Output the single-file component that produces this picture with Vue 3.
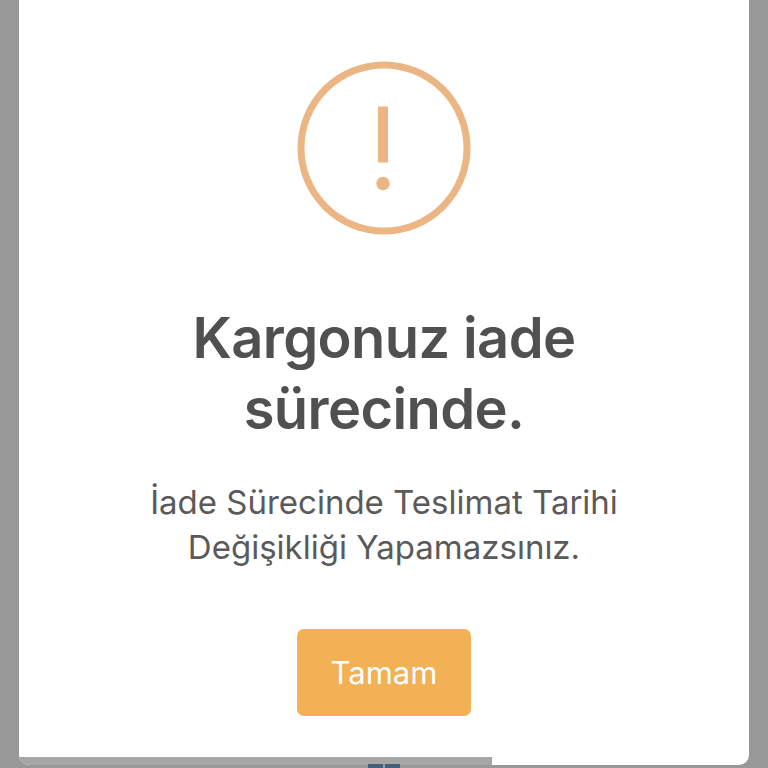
<script setup>
const title = ['Kargonuz iade', 'sürecinde.']
const body = ['İade Sürecinde Teslimat Tarihi', 'Değişikliği Yapamazsınız.']
</script>

<template>
  <main class="page">
    <section class="modal">
      <svg class="icon" width="174" height="174" viewBox="0 0 174 174" aria-hidden="true">
        <circle cx="87" cy="87" r="83" fill="none" stroke="#ebb684" stroke-width="7" />
        <rect x="81" y="45.500" width="10" height="56" fill="#ebb684" />
        <circle cx="86" cy="122.500" r="6.700" fill="#ebb684" />
      </svg>
      <h1 class="title"><span v-for="l in title" :key="l">{{ l }}</span></h1>
      <p class="text"><span v-for="l in body" :key="l">{{ l }}</span></p>
      <button class="ok" type="button">Tamam</button>
      <div class="strip"></div>
    </section>
    <div class="peek"></div>
  </main>
</template>

<style scoped>
.page {
  width: 768px;
  height: 768px;
  background: #999999;
  overflow: hidden;
  position: relative;
  font-family: Inter, "Liberation Sans", sans-serif;
}
.modal {
  position: relative;
  width: 730px;
  height: 765px;
  margin-left: 19px;
  background: #fff;
  border-radius: 0 0 10px 10px;
  overflow: hidden;
  display: flex;
  flex-direction: column;
  align-items: center;
  padding-top: 61px;
  box-sizing: border-box;
}
.icon { display: block; }
.title {
  margin: 68px 0 0;
  font-size: 56px;
  line-height: 71px;
  font-weight: 600;
  letter-spacing: -0.6px;
  color: #505050;
  text-align: center;
}
.title span, .text span { display: block; }
.text {
  margin: 35px 0 0;
  font-size: 33px;
  line-height: 45px;
  font-weight: 400;
  color: #5a5a5a;
  text-align: center;
}
.ok {
  margin-top: 59px;
  width: 174px;
  height: 87px;
  border: 0;
  border-radius: 7px;
  background: #f2b154;
  color: #fff;
  font: 400 31px Inter, "Liberation Sans", sans-serif;
  padding: 0;
}
.strip {
  position: absolute;
  left: 0;
  bottom: 0;
  width: 473px;
  height: 8px;
  background: #a6a6a6;
}
.peek {
  position: absolute;
  left: 368px;
  top: 764px;
  width: 32px;
  height: 4px;
  background: linear-gradient(90deg, #47607a 0 47%, #8f9aa6 47% 53%, #47607a 53% 100%);
}
</style>
